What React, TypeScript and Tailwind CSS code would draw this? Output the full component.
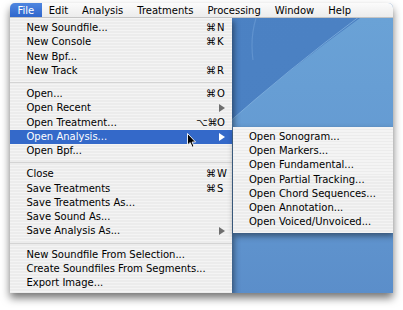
import React from "react";

type Item =
  | { sep: true }
  | { label: string; mods?: string; k?: string; sub?: boolean; active?: boolean; sep?: false };

const menuBar = ["File", "Edit", "Analysis", "Treatments", "Processing", "Window", "Help"];

const fileMenu: Item[] = [
  { label: "New Soundfile...", mods: "⌘", k: "N" },
  { label: "New Console", mods: "⌘", k: "K" },
  { label: "New Bpf..." },
  { label: "New Track", mods: "⌘", k: "R" },
  { sep: true },
  { label: "Open...", mods: "⌘", k: "O" },
  { label: "Open Recent", sub: true },
  { label: "Open Treatment...", mods: "⌥⌘", k: "O" },
  { label: "Open Analysis...", sub: true, active: true },
  { label: "Open Bpf..." },
  { sep: true },
  { label: "Close", mods: "⌘", k: "W" },
  { label: "Save Treatments", mods: "⌘", k: "S" },
  { label: "Save Treatments As..." },
  { label: "Save Sound As..." },
  { label: "Save Analysis As...", sub: true },
  { sep: true },
  { label: "New Soundfile From Selection..." },
  { label: "Create Soundfiles From Segments..." },
  { label: "Export Image..." },
];

const analysisMenu = [
  "Open Sonogram...",
  "Open Markers...",
  "Open Fundamental...",
  "Open Partial Tracking...",
  "Open Chord Sequences...",
  "Open Annotation...",
  "Open Voiced/Unvoiced...",
];

function Arrow({ white }: { white?: boolean }) {
  return (
    <svg width="6" height="8" viewBox="0 0 6 8" className="shrink-0">
      <path d="M0 0 L6 4 L0 8 Z" fill={white ? "#ffffff" : "#6e6e6e"} />
    </svg>
  );
}

function Cursor() {
  return (
    <svg width="10" height="16" viewBox="0 0 10 16" className="absolute left-[177px] top-[115px]">
      <path
        d="M0.5 0.5 L0.5 12 L3.2 9.6 L5.2 14.2 L7 13.4 L5.1 9 L8.6 9 Z"
        fill="#000000"
        stroke="#ffffff"
        strokeWidth="0.9"
        strokeLinejoin="round"
      />
    </svg>
  );
}

function Wallpaper() {
  return (
    <svg className="absolute inset-0" width="383" height="275" viewBox="0 0 383 275">
      <defs>
        <linearGradient id="light" x1="0" y1="0" x2="0" y2="1">
          <stop offset="0" stopColor="#6aa2d6" />
          <stop offset="0.5" stopColor="#649ad2" />
          <stop offset="1" stopColor="#5b8eca" />
        </linearGradient>
        <linearGradient id="dark" x1="0" y1="0" x2="1" y2="1">
          <stop offset="0" stopColor="#4c82c4" />
          <stop offset="1" stopColor="#4a80c2" />
        </linearGradient>
      </defs>
      <rect width="383" height="275" fill="url(#light)" />
      <path d="M0 0 L350 0 Q280 50 210 112 L0 160 Z" fill="url(#dark)" />
      <path d="M350 -2 Q280 50 210 112" stroke="#8fbde6" strokeWidth="0.8" fill="none" opacity="0.8" />
      <path d="M243 42 Q240 20 246 0" stroke="#6e9fd6" strokeWidth="1.2" fill="none" opacity="0.6" />
    </svg>
  );
}

export default function App() {
  return (
    <div
      className="w-[403px] h-[310px] bg-white pt-[3px] pl-[10px] overflow-hidden"
      style={{ fontFamily: '"DejaVu Sans", sans-serif' }}
    >
      <div className="relative w-[383px] h-[290px] rounded-t-[5px] overflow-hidden flex flex-col shadow-[0_5px_9px_rgba(0,0,0,0.55)] bg-[#5b8eca]">
        {/* menu bar */}
        <div className="h-[15px] shrink-0 flex items-stretch bg-[linear-gradient(180deg,#fbfbfb,#ececec)] text-[10px] leading-[15px] text-black border-b border-[#c4c4c4] relative z-10">
          {menuBar.map((m, i) => (
            <div
              key={m}
              className={
                i === 0
                  ? "px-[7.5px] bg-[linear-gradient(180deg,#4f86e0,#2f66cc)] text-white"
                  : "px-[7px]"
              }
            >
              {m}
            </div>
          ))}
        </div>

        {/* desktop */}
        <div className="relative flex-1 flex items-start">
          <Wallpaper />

          {/* file menu */}
          <div className="relative w-[222px] py-[3px] bg-[repeating-linear-gradient(180deg,#f4f4f4_0px,#f4f4f4_1.5px,#ececec_1.5px,#ececec_3px)] shadow-[2px_3px_6px_rgba(0,0,0,0.45)] text-[10px] text-black">
            {fileMenu.map((it, i) =>
              it.sep ? (
                <div key={i} className="h-[9px] flex items-center">
                  <div className="h-px w-full bg-[#d4d4d4]" />
                </div>
              ) : (
                <div
                  key={i}
                  className={
                    "h-[14.25px] flex items-center pl-[16.5px] pr-[7px] leading-none " +
                    (it.active ? "bg-[#3469c9] text-white" : "")
                  }
                >
                  <span className="flex-1 whitespace-nowrap">{it.label}</span>
                  {it.sub ? (
                    <Arrow white={it.active} />
                  ) : it.k ? (
                    <span className="flex w-[31px] -mr-[2px]">
                      <span className="w-[20px] text-right whitespace-nowrap">{it.mods}</span>
                      <span className="pl-[1px]">{it.k}</span>
                    </span>
                  ) : null}
                </div>
              )
            )}
          </div>

          {/* analysis submenu */}
          <div className="absolute left-[223px] top-[108.75px] w-[160px] py-[3px] bg-[repeating-linear-gradient(180deg,#f4f4f4_0px,#f4f4f4_1.5px,#ececec_1.5px,#ececec_3px)] shadow-[1px_3px_6px_rgba(0,0,0,0.45)] text-[10px] text-black">
            {analysisMenu.map((s) => (
              <div key={s} className="h-[14.25px] flex items-center pl-[16px] leading-none whitespace-nowrap">
                {s}
              </div>
            ))}
          </div>

          <Cursor />
        </div>
      </div>
    </div>
  );
}
